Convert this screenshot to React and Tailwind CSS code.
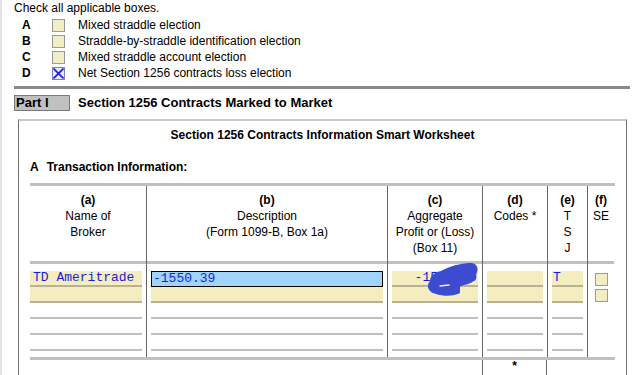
import React from "react";

const elections = [
  { letter: "A", label: "Mixed straddle election", checked: false },
  { letter: "B", label: "Straddle-by-straddle identification election", checked: false },
  { letter: "C", label: "Mixed straddle account election", checked: false },
  { letter: "D", label: "Net Section 1256 contracts loss election", checked: true },
];

const Box = ({ checked }) =>
  checked ? (
    <div className="w-[13px] h-[13px] border border-[#8080c0] bg-[#e8e8f0] flex items-center justify-center">
      <svg width="11" height="11" viewBox="0 0 11 11">
        <path d="M0.5 0.5 L10.5 10.5 M10.5 0.5 L0.5 10.5" stroke="#1a1ae0" strokeWidth="1.6" />
      </svg>
    </div>
  ) : (
    <div className="w-[13px] h-[13px] border border-[#9a9a9a] bg-[#f3edc3]" />
  );

// blue pen mark hiding part of the amount
const Scribble = () => (
  <svg
    className="absolute left-[36px] top-[-8px]"
    width="50"
    height="36"
    viewBox="0 0 50 36"
  >
    <g fill="#3c4bd0" stroke="#3c4bd0" strokeWidth="4" strokeLinecap="round" strokeLinejoin="round">
      <path d="M4 19 C 8 11, 22 4, 40 2 C 48 1, 49 6, 46 11 C 43 17, 36 20, 30 22 L 30 29 C 22 32, 12 31, 5 28 C 1 25, 1 22, 4 19 Z" />
      <ellipse cx="15" cy="18" rx="11" ry="8" />
      <ellipse cx="33" cy="13" rx="13" ry="7" />
    </g>
    <path d="M12 23 L 21 22" stroke="#f3edc0" strokeWidth="1.5" strokeLinecap="round" />
  </svg>
);

const Row = ({ filled, children, className = "" }) => (
  <div
    className={
      "h-4 border-b-2 flex items-center " +
      (filled ? "bg-[#f3edc0] border-[#b8b196] " : "border-[#c0c0c0] ") +
      className
    }
  >
    {children}
  </div>
);

const Column = ({ width, last, header, children }) => (
  <div className={"flex flex-col " + width + (last ? "" : " border-r border-[#666666]")}>
    <div className="h-[78px] border-b-[3px] border-[#c0c0c0] pt-[6px] text-center leading-4">
      {header}
    </div>
    <div className="pt-[7px] pb-[6px] flex-1">{children}</div>
  </div>
);

const mono = "font-['Liberation_Mono','Courier_New',monospace] text-[13px] text-[#1c1cdb]";

export default function App() {
  return (
    <div className="w-[639px] h-[375px] overflow-hidden bg-white border-l-2 border-[#e4e4e4] font-['Liberation_Sans',Arial,sans-serif] text-[12px] leading-4 text-black">
      <div className="pl-3 pr-[9px]">
        <div>Check all applicable boxes.</div>
        <div className="pt-[1px]">
          {elections.map((e) => (
            <div key={e.letter} className="flex items-center h-4">
              <span className="ml-2 w-[30px] font-bold">{e.letter}</span>
              <Box checked={e.checked} />
              <span className="ml-[13px]">{e.label}</span>
            </div>
          ))}
        </div>

        <div className="mt-[5px] h-[3px] bg-[#8a8a8a]" />

        <div className="mt-[6px] flex items-center">
          <div className="w-[56px] h-4 bg-[#c0c0c0] border border-[#7a7a7a] font-bold text-[13px] leading-[14px] pl-[1px]">
            Part I
          </div>
          <span className="ml-2 font-bold text-[13px]">Section 1256 Contracts Marked to Market</span>
        </div>

        <div className="mt-2 ml-1 mr-[3px] h-[270px] border-t-2 border-t-[#c8c8c8] border-x border-x-[#707070] px-[11px]">
          <div className="pt-[6px] text-center font-bold">
            Section 1256 Contracts Information Smart Worksheet
          </div>
          <div className="mt-4 font-bold">
            A<span className="ml-[8px]">Transaction Information:</span>
          </div>

          <div className="mt-2 flex border-y-[3px] border-[#c0c0c0]">
            <Column
              width="w-[117px]"
              header={
                <>
                  <div className="font-bold">(a)</div>
                  <div>Name of</div>
                  <div>Broker</div>
                </>
              }
            >
              <div className="pr-1">
                <Row filled>
                  <span className={mono + " pl-[3px]"}>TD Ameritrade</span>
                </Row>
                <Row filled />
                <Row />
                <Row />
                <Row />
              </div>
            </Column>

            <Column
              width="w-[241px]"
              header={
                <>
                  <div className="font-bold">(b)</div>
                  <div>Description</div>
                  <div>(Form 1099-B, Box 1a)</div>
                </>
              }
            >
              <div className="px-1">
                <div className="h-4 bg-[#a0d4fa] border border-black flex items-center">
                  <span className={mono + " pl-[1px]"}>-1550.39</span>
                </div>
                <Row filled />
                <Row />
                <Row />
                <Row />
              </div>
            </Column>

            <Column
              width="w-[95px]"
              header={
                <>
                  <div className="font-bold">(c)</div>
                  <div>Aggregate</div>
                  <div>Profit or (Loss)</div>
                  <div>(Box 11)</div>
                </>
              }
            >
              <div className="px-1">
                <div className="relative">
                  <Row filled className="justify-end">
                    <span className={mono + " pr-[1px]"}>-1550.39</span>
                  </Row>
                  <Scribble />
                </div>
                <Row filled />
                <Row />
                <Row />
                <Row />
              </div>
            </Column>

            <Column
              width="w-[65px]"
              header={
                <>
                  <div className="font-bold">(d)</div>
                  <div>Codes *</div>
                </>
              }
            >
              <div className="px-1">
                <Row filled />
                <Row filled />
                <Row />
                <Row />
                <Row />
              </div>
            </Column>

            <Column
              width="w-[40px]"
              header={
                <>
                  <div className="font-bold">(e)</div>
                  <div>T</div>
                  <div>S</div>
                  <div>J</div>
                </>
              }
            >
              <div className="px-1">
                <Row filled>
                  <span className={mono + " pl-[1px]"}>T</span>
                </Row>
                <Row filled />
                <Row />
                <Row />
                <Row />
              </div>
            </Column>

            <Column
              width="w-[26px]"
              last
              header={
                <>
                  <div className="font-bold">(f)</div>
                  <div>SE</div>
                </>
              }
            >
              <div className="flex flex-col items-center gap-[3px] pt-[2px] pl-[1px]">
                <Box />
                <Box />
              </div>
            </Column>
          </div>

          <div className="flex h-8">
            <div className="w-[452px]" />
            <div className="w-[65px] border-x border-[#666666] text-center font-bold leading-3">*</div>
          </div>
        </div>
      </div>
    </div>
  );
}
